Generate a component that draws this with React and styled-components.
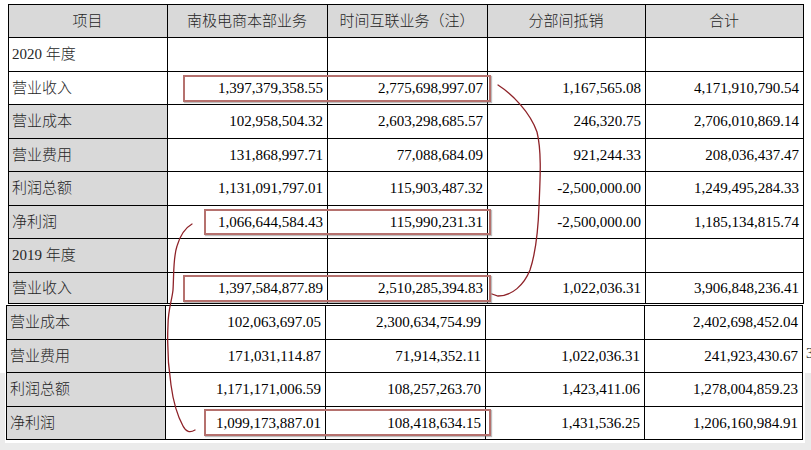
import React from "react";
import styled, { createGlobalStyle } from "styled-components";

const GlobalStyle = createGlobalStyle`
  html, body { margin: 0; padding: 0; background: #fff; }
  body { font-family: "Liberation Serif", "Noto Sans CJK SC", serif; }
`;

const Page = styled.div`
  position: relative;
  width: 811px;
  height: 450px;
  overflow: hidden;
  background: #fff;
  display: flex;
  flex-direction: column;
`;

const TopSheet = styled.div`
  padding: 4px 0 0 8px;
`;

const BottomArea = styled.div`
  flex: 1;
  display: flex;
  padding: 0 6px 7px 5px;
  background: linear-gradient(to bottom, #fff 0, #fff 69px, #ebebeb 69px);
`;

const Panel = styled.div`
  flex: 1;
  background: #fff;
  padding: 1px 0 3px 1px;
`;

const Grid = styled.div`
  display: grid;
  width: max-content;
  grid-template-columns: ${(p) => p.$cols};
  grid-template-rows: ${(p) => p.$rows};
  border-top: 1px solid #000;
  border-left: 1px solid #000;
`;

const Cell = styled.div`
  box-sizing: border-box;
  display: flex;
  align-items: center;
  justify-content: ${(p) =>
    p.$align === "left" ? "flex-start" : p.$align === "center" ? "center" : "flex-end"};
  padding: 0 4px 0 3px;
  border-right: 1px solid #000;
  border-bottom: 1px solid #000;
  background: ${(p) => (p.$shade ? "#d9d9d9" : "#fff")};
  color: ${(p) => (p.$cjk ? "#262626" : "#000")};
  font-family: "Liberation Serif", "Noto Sans CJK SC", serif;
  font-weight: ${(p) => (p.$cjk ? 300 : 400)};
  font-size: 15px;
  white-space: nowrap;
  line-height: 1;
`;

const Mark = styled.div`
  position: absolute;
  box-sizing: border-box;
  border: 2px solid #b5716e;
  box-shadow: 1px 1px 1px rgba(110, 110, 110, 0.45);
  pointer-events: none;
`;

const Scribble = styled.svg`
  position: absolute;
  left: 0;
  top: 0;
  pointer-events: none;
`;

const Stray = styled.span`
  position: absolute;
  left: 806px;
  top: 345px;
  font-family: "Liberation Serif", serif;
  font-size: 15px;
  color: #333;
`;

const header = ["项目", "南极电商本部业务", "时间互联业务（注）", "分部间抵销", "合计"];

const topRows = [
  { label: "2020 年度", shade: false, vals: ["", "", "", ""] },
  { label: "营业收入", shade: false, vals: ["1,397,379,358.55", "2,775,698,997.07", "1,167,565.08", "4,171,910,790.54"] },
  { label: "营业成本", shade: true, vals: ["102,958,504.32", "2,603,298,685.57", "246,320.75", "2,706,010,869.14"] },
  { label: "营业费用", shade: true, vals: ["131,868,997.71", "77,088,684.09", "921,244.33", "208,036,437.47"] },
  { label: "利润总额", shade: true, vals: ["1,131,091,797.01", "115,903,487.32", "-2,500,000.00", "1,249,495,284.33"] },
  { label: "净利润", shade: true, vals: ["1,066,644,584.43", "115,990,231.31", "-2,500,000.00", "1,185,134,815.74"] },
  { label: "2019 年度", shade: true, vals: ["", "", "", ""] },
  { label: "营业收入", shade: true, vals: ["1,397,584,877.89", "2,510,285,394.83", "1,022,036.31", "3,906,848,236.41"] },
];

const bottomRows = [
  { label: "营业成本", shade: true, vals: ["102,063,697.05", "2,300,634,754.99", "", "2,402,698,452.04"] },
  { label: "营业费用", shade: true, vals: ["171,031,114.87", "71,914,352.11", "1,022,036.31", "241,923,430.67"] },
  { label: "利润总额", shade: true, vals: ["1,171,171,006.59", "108,257,263.70", "1,423,411.06", "1,278,004,859.23"] },
  { label: "净利润", shade: true, vals: ["1,099,173,887.01", "108,418,634.15", "1,431,536.25", "1,206,160,984.91"] },
];

const marks = [
  { left: 183, top: 75, width: 308, height: 27 },
  { left: 204, top: 209, width: 287, height: 26 },
  { left: 183, top: 275, width: 308, height: 27 },
  { left: 204, top: 409, width: 287, height: 27 },
];

function Rows({ rows }) {
  return rows.map((r, i) => (
    <React.Fragment key={i}>
      <Cell $align="left" $shade={r.shade} $cjk>
        {r.label}
      </Cell>
      {r.vals.map((v, j) => (
        <Cell key={j}>{v}</Cell>
      ))}
    </React.Fragment>
  ));
}

export default function App() {
  return (
    <>
      <GlobalStyle />
      <Page>
        <TopSheet>
          <Grid
            $cols="159px 160px 160px 158px 158px"
            $rows="33px 34px 33px 34px 33px 34px 33px 34px 31px"
          >
            {header.map((h) => (
              <Cell key={h} $align="center" $shade $cjk>
                {h}
              </Cell>
            ))}
            <Rows rows={topRows} />
          </Grid>
        </TopSheet>
        <BottomArea>
          <Panel>
            <Grid $cols="159px 160px 160px 159px 158px" $rows="34px 33px 34px 33px">
              <Rows rows={bottomRows} />
            </Grid>
          </Panel>
        </BottomArea>

        {marks.map((m, i) => (
          <Mark key={i} style={{ left: m.left, top: m.top, width: m.width, height: m.height }} />
        ))}

        <Scribble width="811" height="450" viewBox="0 0 811 450">
          <path
            d="M498 85 C512 94, 530 112, 537 132 C542 152, 540 182, 539 206 C538 234, 535 255, 530 270 C524 285, 512 296, 498 296 L492 294"
            fill="none"
            stroke="#8e2228"
            strokeWidth="1.3"
            strokeLinecap="round"
          />
          <path
            d="M192 224 C185 228, 180 236, 177 246 C173 258, 174 275, 173 290 C172 300, 168 310, 168 325 C167 345, 168 365, 171 385 C173 400, 177 415, 183 426 C186 432, 190 433, 195 430"
            fill="none"
            stroke="#8e2228"
            strokeWidth="1.3"
            strokeLinecap="round"
          />
        </Scribble>
        <Stray>3</Stray>
      </Page>
    </>
  );
}
